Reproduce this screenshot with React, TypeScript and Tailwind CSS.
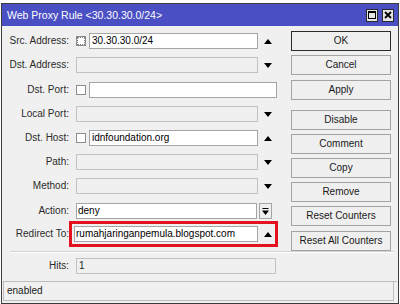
import React from "react";

const Up = () => (
  <svg width="8" height="5" viewBox="0 0 8 5">
    <polygon points="0,5 8,5 4,0" fill="#000" />
  </svg>
);
const Down = () => (
  <svg width="8" height="5" viewBox="0 0 8 5">
    <polygon points="0,0 8,0 4,5" fill="#000" />
  </svg>
);

const Arrow = ({ up }: { up?: boolean }) => (
  <div className="w-[20px] h-[16px] flex items-center justify-center">{up ? <Up /> : <Down />}</div>
);

const Label = ({ children }: { children: React.ReactNode }) => (
  <div className="w-[67px] h-[16px] flex items-center justify-end text-[#2b2b2b] whitespace-nowrap">{children}</div>
);

const Check = ({ dotted }: { dotted?: boolean }) => (
  <div className="w-[10px] h-[10px] mt-[3px] bg-white border border-[#8a8a8a] flex items-center justify-center">
    {dotted ? <div className="w-[8px] h-[8px] border border-dotted border-[#7a7a7a]" /> : null}
  </div>
);

const Btn = ({ children, cls, dflt }: { children: React.ReactNode; cls: string; dflt?: boolean }) => (
  <div
    className={
      "w-[100px] h-[20px] flex items-center justify-center bg-[#efefef] text-[#1a1a1a] " +
      (dflt ? "border border-[#2a2a2a] " : "border border-[#a3a3a3] ") +
      cls
    }
  >
    {children}
  </div>
);

export default function App() {
  return (
    <div
      className="w-[400px] h-[304px] bg-white overflow-hidden text-[10px] leading-[14px]"
      style={{ fontFamily: '"Liberation Sans", Arial, sans-serif' }}
    >
      <div className="mt-[3px] ml-[1px] w-[398px] h-[301px] border border-[#3c3c3c] bg-[#f0f0f0] flex flex-col">
        {/* Title bar */}
        <div className="h-[22px] bg-[#4a4fc4] flex items-center justify-between pl-[5px] pr-[4px]">
          <span className="text-white text-[10.5px]">Web Proxy Rule &lt;30.30.30.0/24&gt;</span>
          <div className="flex gap-[4px]">
            <div className="w-[12px] h-[13px] bg-[#e6e6e6] border border-[#2a2a2a] flex items-center justify-center">
              <svg width="8" height="8" viewBox="0 0 8 8">
                <rect x="0.5" y="0.5" width="7" height="7" fill="none" stroke="#000" strokeWidth="1" />
                <rect x="0" y="0" width="8" height="2" fill="#000" />
              </svg>
            </div>
            <div className="w-[12px] h-[13px] bg-[#e6e6e6] border border-[#2a2a2a] flex items-center justify-center">
              <svg width="8" height="8" viewBox="0 0 8 8">
                <path d="M1 1 L7 7 M7 1 L1 7" stroke="#000" strokeWidth="1.8" />
              </svg>
            </div>
          </div>
        </div>

        {/* Main */}
        <div className="flex h-[225px]">
          <div className="w-[276px] pt-[7px] flex flex-col">
            <div className="flex h-[24px]">
              <Label>Src. Address:</Label>
              <div className="ml-[7px]"><Check dotted /></div>
              <div className="ml-[3px] w-[169px] h-[16px] bg-white border border-[#a5a5a5] flex items-center pl-[2px] text-black">30.30.30.0/24</div>
              <Arrow up />
            </div>
            <div className="flex h-[25px]">
              <Label>Dst. Address:</Label>
              <div className="ml-[7px] w-[182px] h-[16px] border border-[#c2c2c2]" />
              <Arrow />
            </div>
            <div className="flex h-[24px]">
              <Label>Dst. Port:</Label>
              <div className="ml-[7px]"><Check /></div>
              <div className="ml-[3px] w-[188px] h-[16px] bg-white border border-[#a5a5a5]" />
            </div>
            <div className="flex h-[24px]">
              <Label>Local Port:</Label>
              <div className="ml-[7px] w-[182px] h-[16px] border border-[#c2c2c2]" />
              <Arrow />
            </div>
            <div className="flex h-[24px]">
              <Label>Dst. Host:</Label>
              <div className="ml-[7px]"><Check /></div>
              <div className="ml-[3px] w-[169px] h-[16px] bg-white border border-[#a5a5a5] flex items-center pl-[2px] text-black">idnfoundation.org</div>
              <Arrow up />
            </div>
            <div className="flex h-[24px]">
              <Label>Path:</Label>
              <div className="ml-[7px] w-[182px] h-[16px] border border-[#c2c2c2]" />
              <Arrow />
            </div>
            <div className="flex h-[25px]">
              <Label>Method:</Label>
              <div className="ml-[7px] w-[182px] h-[16px] border border-[#c2c2c2]" />
              <Arrow />
            </div>
            <div className="flex h-[23px]">
              <Label>Action:</Label>
              <div className="ml-[7px] w-[181px] h-[16px] bg-white border border-[#a5a5a5] flex items-center pl-[1px] text-black">deny</div>
              <div className="ml-[2px] w-[13px] h-[16px] bg-[#efefef] border border-[#a5a5a5] flex items-center justify-center">
                <svg width="7" height="7" viewBox="0 0 7 7">
                  <rect x="0.5" y="0" width="6" height="1" fill="#000" />
                  <polygon points="0,2.5 7,2.5 3.5,7" fill="#000" />
                </svg>
              </div>
            </div>
            <div className="flex h-[25px] relative">
              <Label>Redirect To:</Label>
              <div className="ml-[5px] w-[184px] h-[16px] bg-white border border-[#a5a5a5] flex items-center pl-[1px] text-black whitespace-nowrap overflow-hidden">rumahjaringanpemula.blogspot.com</div>
              <Arrow up />
              <div className="absolute left-[67px] top-[-5px] w-[209px] h-[26px] border-[3px] border-[#e3121c]" />
            </div>
          </div>

          <div className="ml-[13px] pt-[5px] flex flex-col">
            <Btn cls="" dflt>OK</Btn>
            <Btn cls="mt-[4px]">Cancel</Btn>
            <Btn cls="mt-[5px]">Apply</Btn>
            <Btn cls="mt-[10px]">Disable</Btn>
            <Btn cls="mt-[4px]">Comment</Btn>
            <Btn cls="mt-[4px]">Copy</Btn>
            <Btn cls="mt-[4px]">Remove</Btn>
            <Btn cls="mt-[4px]">Reset Counters</Btn>
            <Btn cls="mt-[5px]">Reset All Counters</Btn>
          </div>
        </div>

        {/* Separator */}
        <div className="ml-[8px] mr-[4px] h-[2px] flex flex-col">
          <div className="h-[1px] bg-[#d2d2d2]" />
          <div className="h-[1px] bg-white" />
        </div>

        {/* Hits */}
        <div className="flex mt-[5px] h-[16px]">
          <Label>Hits:</Label>
          <div className="ml-[7px] w-[200px] h-[16px] border border-[#c2c2c2] flex items-center pl-[2px] text-[#222]">1</div>
        </div>

        {/* Status bar */}
        <div className="mt-[7px] ml-[1px] mr-[1px] h-[20px] flex">
          <div className="flex-1 border border-[#bdbdbd] flex items-center pl-[3px] text-[#1a1a1a]">enabled</div>
          <div className="w-[3px] border-t border-[#bdbdbd]" />
        </div>
      </div>
    </div>
  );
}
